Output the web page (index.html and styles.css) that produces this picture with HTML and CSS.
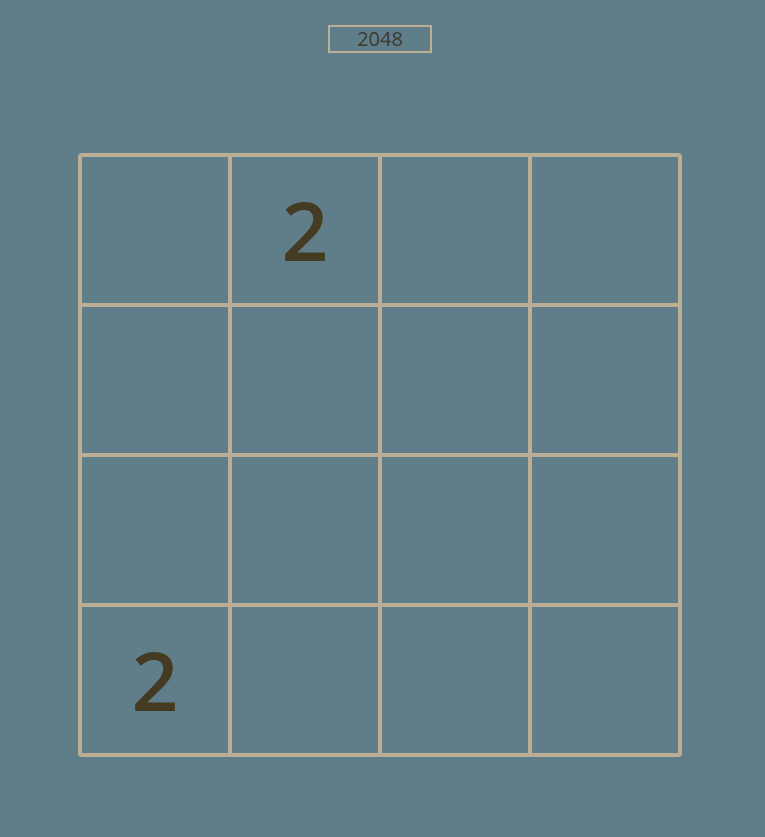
FILE: index.html
```html
<!DOCTYPE html>
<html>
<head>
<meta charset="utf-8">
<link rel="stylesheet" href="styles.css">
</head>
<body>
<div class="page">
  <div class="header"><div class="title">2048</div></div>
  <div class="board">
    <div class="cell"></div><div class="cell">2</div><div class="cell"></div><div class="cell"></div>
    <div class="cell"></div><div class="cell"></div><div class="cell"></div><div class="cell"></div>
    <div class="cell"></div><div class="cell"></div><div class="cell"></div><div class="cell"></div>
    <div class="cell">2</div><div class="cell"></div><div class="cell"></div><div class="cell"></div>
  </div>
</div>
</body>
</html>
```
FILE: styles.css
```css
html, body {
  margin: 0;
  padding: 0;
  background: #607e8a;
  height: 100%;
}
.page {
  padding-left: 78px;
  padding-top: 25px;
  width: 604px;
}
.header {
  display: flex;
  justify-content: center;
}
.title {
  width: 100px;
  height: 24px;
  border: 2px solid #bcae94;
  color: #3a3a30;
  font-family: "Open Sans", sans-serif;
  font-size: 20px;
  line-height: 24px;
  text-align: center;
}
.board {
  margin-top: 100px;
  display: grid;
  grid-template-columns: repeat(4, 146px);
  grid-template-rows: repeat(4, 146px);
  gap: 4px;
  padding: 4px;
  background: #bcae94;
  border-radius: 4px;
}
.cell {
  background: #607e8a;
  display: flex;
  align-items: center;
  justify-content: center;
  color: #453a22;
  font-family: "Open Sans", sans-serif;
  font-weight: 600;
  font-size: 82px;
  line-height: 1;
  padding-bottom: 2px;
  box-sizing: border-box;
}
```
